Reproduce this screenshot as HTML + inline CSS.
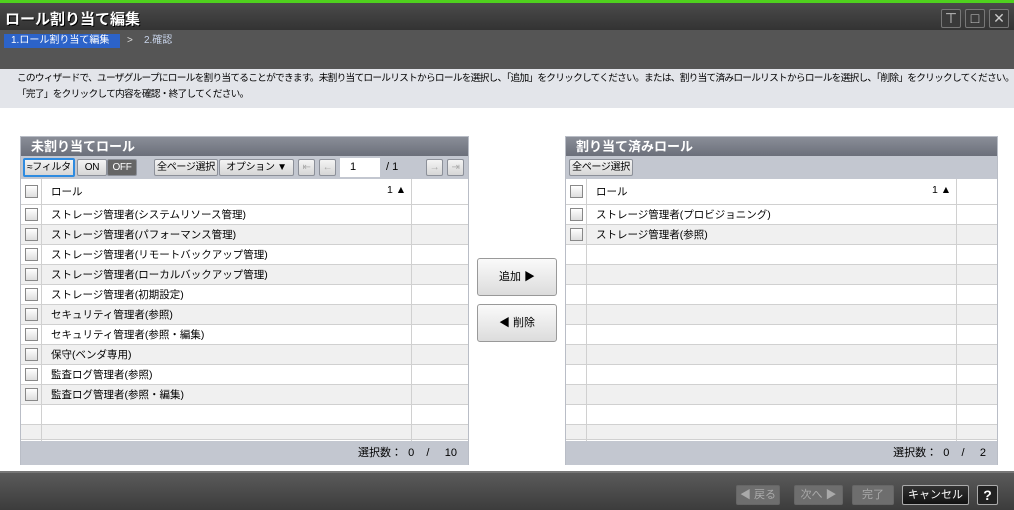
<!DOCTYPE html>
<html><head><meta charset="utf-8"><style>
*{margin:0;padding:0;box-sizing:border-box}
body{width:1014px;height:510px;overflow:hidden;background:#fff;font-family:"Liberation Sans","Noto Sans CJK JP",sans-serif;font-size:11px;color:#000;position:relative}
.abs{position:absolute}
.tb{left:0;top:0;width:1014px;height:30px;background:linear-gradient(#4a4a4a,#333);border-top:3px solid #4fd11e}
.tb .t{left:5px;top:5px;color:#fff;font-weight:bold;font-size:15px;text-shadow:1px 1px 0 #000}
.wb{top:6px;width:20px;height:19px;border:1px solid #777;border-radius:2px;background:#3a3a3a;color:#ccc;text-align:center;font-size:14px;line-height:17px}
.bc{left:0;top:30px;width:1014px;height:39px;background:#555}
.desc{left:0;top:69px;width:1014px;height:39px;background:#e3e5ea;padding-left:17px;line-height:16px;font-size:9.7px;letter-spacing:-0.75px;padding-top:2px;white-space:nowrap;overflow:hidden}
.panel{border:1px solid #b9bdc6;background:#fff}
.ph{height:19px;background:linear-gradient(#8a8e98,#6b6f7a);color:#fff;font-weight:bold;font-size:13px;padding-left:10px;line-height:19px}
.tool{height:23px;background:#c3c7d0;position:relative}
.btn{position:absolute;top:3px;height:17px;border:1px solid #8c9099;border-radius:2px;background:linear-gradient(#f4f4f4,#d6d6d6);font-size:10px;line-height:16px;text-align:center;white-space:nowrap;overflow:hidden;letter-spacing:-0.3px}
.row{position:absolute;left:0;height:20px;border-bottom:1px solid #d0d0d0;width:100%}
.row span{font-size:10.5px}
.cb{position:absolute;left:4px;top:3px;width:13px;height:13px;border:1px solid #888;background:linear-gradient(#fff,#ddd)}
.vl{position:absolute;top:0;width:1px;background:#d0d0d0}
.foot{position:absolute;left:0;width:100%;height:24px;background:#c3c7d0;text-align:right;line-height:24px;padding-right:11px}
.bb{left:0;top:471px;width:1014px;height:39px;background:linear-gradient(#5a5a5a,#3c3c3c);border-top:2px solid #777}
.fb{position:absolute;top:12px;height:20px;border:1px solid #666;border-radius:2px;background:#6e6e6e;color:#aaa;text-align:center;line-height:18px;font-size:11px;white-space:nowrap}
.big{position:absolute;left:477px;width:80px;height:38px;border:1px solid #999;border-radius:3px;background:linear-gradient(#fafafa,#dcdcdc);text-align:center;line-height:36px;font-size:11px}
</style></head><body>
<div class="abs tb"><div class="abs t">ロール割り当て編集</div>
<div class="abs wb" style="left:941px">&#8868;</div><div class="abs wb" style="left:965px">&#9633;</div><div class="abs wb" style="left:989px">✕</div></div>
<div class="abs bc"><div class="abs" style="left:4px;top:4px;width:116px;height:14px;background:#2c63c9;color:#fff;padding-left:7px;line-height:14px;font-size:10px">1.ロール割り当て編集</div>
<div class="abs" style="left:127px;top:4px;color:#ddd;font-size:10px;line-height:14px">&gt;&nbsp;&nbsp;&nbsp;&nbsp;<span style="color:#c8d4ea">2.確認</span></div></div>
<div class="abs desc">このウィザードで、ユーザグループにロールを割り当てることができます。未割り当てロールリストからロールを選択し、「追加」をクリックしてください。または、割り当て済みロールリストからロールを選択し、「削除」をクリックしてください。<br>「完了」をクリックして内容を確認・終了してください。</div>

<div class="abs panel" style="left:20px;top:136px;width:449px;height:329px">
<div class="ph">未割り当てロール</div>
<div class="tool">
<div class="btn" style="left:2px;top:2px;width:52px;height:19px;border:2px solid #2e8be0;line-height:15px">≈フィルタ</div>
<div class="btn" style="left:56px;width:30px">ON</div>
<div class="btn" style="left:86px;width:30px;background:#666;color:#fff">OFF</div>
<div class="btn" style="left:133px;width:64px">全ページ選択</div>
<div class="btn" style="left:198px;width:75px">オプション ▼</div>
<div class="btn" style="left:277px;width:17px;color:#aaa">⇤</div>
<div class="btn" style="left:298px;width:17px;color:#aaa">←</div>
<div class="abs" style="left:319px;top:2px;width:40px;height:19px;background:#fff;padding-left:10px;line-height:19px">1</div>
<div class="abs" style="left:365px;top:2px;line-height:19px">/ 1</div>
<div class="btn" style="left:405px;width:17px;color:#aaa">→</div>
<div class="btn" style="left:426px;width:17px;color:#aaa">⇥</div>
</div>
<div style="position:relative;height:285px">
<div class="row" style="top:0;height:26px;background:#fff"><div class="cb" style="top:6px"></div><span class="abs" style="left:30px;top:5px">ロール</span><span class="abs" style="left:366px;top:5px">1 ▲</span></div>
<div id="L"></div>
<div class="vl" style="left:20px;height:262px"></div><div class="vl" style="left:390px;height:262px"></div>
<div class="foot" style="top:262px">選択数：&nbsp;&nbsp;0&nbsp;&nbsp;&nbsp;&nbsp;/&nbsp;&nbsp;&nbsp;&nbsp;&nbsp;10</div>
</div></div>

<div class="big" style="top:258px">追加 ▶</div>
<div class="big" style="top:304px">◀ 削除</div>

<div class="abs panel" style="left:565px;top:136px;width:433px;height:329px">
<div class="ph">割り当て済みロール</div>
<div class="tool"><div class="btn" style="left:3px;width:64px">全ページ選択</div></div>
<div style="position:relative;height:285px">
<div class="row" style="top:0;height:26px;background:#fff"><div class="cb" style="top:6px"></div><span class="abs" style="left:30px;top:5px">ロール</span><span class="abs" style="left:366px;top:5px">1 ▲</span></div>
<div id="R"></div>
<div class="vl" style="left:20px;height:262px"></div><div class="vl" style="left:390px;height:262px"></div>
<div class="foot" style="top:262px">選択数：&nbsp;&nbsp;0&nbsp;&nbsp;&nbsp;&nbsp;/&nbsp;&nbsp;&nbsp;&nbsp;&nbsp;2</div>
</div></div>

<div class="abs bb">
<div class="fb" style="left:736px;width:44px">◀ 戻る</div>
<div class="fb" style="left:794px;width:49px">次へ ▶</div>
<div class="fb" style="left:852px;width:42px">完了</div>
<div class="fb" style="left:902px;width:67px;background:linear-gradient(#333,#111);color:#fff;border-color:#aaa">キャンセル</div>
<div class="fb" style="left:977px;width:21px;background:#222;color:#fff;border-color:#aaa;font-weight:bold;font-size:14px">?</div>
</div>
<script>
function fill(id,items){var h='';for(var i=0;i<12;i++){var top=26+i*20,ht=i==11?15:20;var bg=i%2?'#f0f0f0':'#fff';h+='<div class="row" style="top:'+top+'px;height:'+ht+'px;background:'+bg+'">'+(i<items.length?'<div class="cb"></div><span class="abs" style="left:30px;top:2px">'+items[i]+'</span>':'')+'</div>';}document.getElementById(id).outerHTML=h;}
fill('L',['ストレージ管理者(システムリソース管理)','ストレージ管理者(パフォーマンス管理)','ストレージ管理者(リモートバックアップ管理)','ストレージ管理者(ローカルバックアップ管理)','ストレージ管理者(初期設定)','セキュリティ管理者(参照)','セキュリティ管理者(参照・編集)','保守(ベンダ専用)','監査ログ管理者(参照)','監査ログ管理者(参照・編集)']);
fill('R',['ストレージ管理者(プロビジョニング)','ストレージ管理者(参照)']);
</script>
</body></html>
